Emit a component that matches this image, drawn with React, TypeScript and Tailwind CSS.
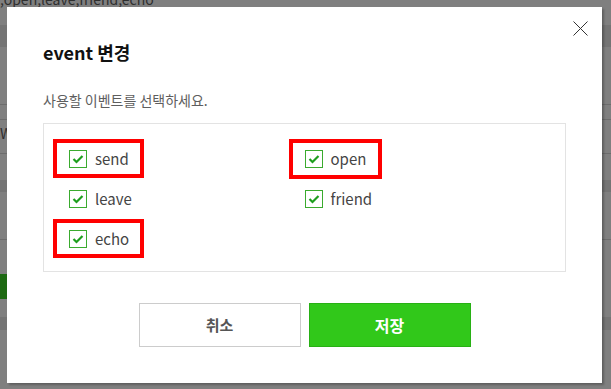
import React from "react";

const font = { fontFamily: '"Noto Sans CJK KR", "Noto Sans", sans-serif' };

function Check() {
  return (
    <span className="flex h-[18px] w-[18px] shrink-0 items-center justify-center border border-[#3aab2e] bg-white">
      <svg width="12" height="10" viewBox="0 0 12 10">
        <path d="M1.5 5 L4.5 8 L10.5 2" fill="none" stroke="#1e9e1e" strokeWidth="2.2" />
      </svg>
    </span>
  );
}

function Item({ label, marked, wide }: { label: string; marked?: boolean; wide?: boolean }) {
  return (
    <div className="flex h-[40px] items-center">
      <div className="relative flex items-center gap-2">
        <Check />
        <span className="text-[15px] leading-[18px] text-[#444]">{label}</span>
        {marked && (
          <div
            className={
              wide
                ? "pointer-events-none absolute bottom-[-11px] left-[-16px] right-[-16px] top-[-11px] border-4 border-[#ff0000]"
                : "pointer-events-none absolute bottom-[-10px] left-[-16px] right-[-15px] top-[-11px] border-4 border-[#ff0000]"
            }
          />
        )}
      </div>
    </div>
  );
}

export default function App() {
  return (
    <div className="relative h-[389px] w-[611px] overflow-hidden bg-[#7f7f7f]" style={font}>
      {/* background page under overlay */}
      <div className="flex h-full flex-col">
        <div className="h-[25px] overflow-hidden">
          <div className="mt-[-8px] text-[14px] leading-[14px] text-[#2e2e2e]">,open,leave,friend,echo</div>
        </div>
        <div className="h-[22px] bg-[#747474]" />
        <div className="h-[58px] border-b border-[#6c6c6c]" />
        <div className="h-[15px] border-b border-[#6c6c6c]" />
        <div className="h-[34px] border-b border-[#6c6c6c] pt-[6px] text-[14px] leading-[14px] text-[#2e2e2e]">W</div>
        <div className="h-[26px]" />
        <div className="h-[12px] bg-[#747474]" />
        <div className="h-[48px] border-b border-[#6c6c6c]" />
        <div className="h-[34px]" />
        <div className="h-[25px] w-[40px] bg-[#1d6912]" />
        <div className="h-[18px]" />
        <div className="h-[13px] bg-[#747474]" />
        <div className="flex-1" />
      </div>

      {/* modal */}
      <div className="absolute left-[7px] top-[7px] flex h-[376px] w-[595px] flex-col bg-white px-[36px] pt-[33px] shadow-[2px_2px_2px_rgba(0,0,0,0.25)]">
        <button className="absolute right-[14px] top-[14px] flex h-[15px] w-[15px] items-center justify-center">
          <svg width="15" height="15" viewBox="0 0 15 15">
            <path d="M0.5 0.5 L14.5 14.5 M14.5 0.5 L0.5 14.5" stroke="#333" strokeWidth="1" fill="none" />
          </svg>
        </button>
        <h2 className="text-[18px] font-bold leading-[24px] text-[#111]">event 변경</h2>
        <p className="mt-[26px] text-[14px] leading-[20px] text-[#5e5e5e]">사용할 이벤트를 선택하세요.</p>
        <div className="mt-[13px] grid h-[149px] grid-cols-2 content-start border border-[#e3e3e3] px-[25px] pt-[15px]">
          <Item label="send" marked />
          <Item label="open" marked wide />
          <Item label="leave" />
          <Item label="friend" />
          <Item label="echo" marked />
        </div>
        <div className="mt-[31px] flex justify-center gap-2">
          <button className="h-[44px] w-[162px] border border-[#cccccc] bg-white text-[15px] font-bold text-[#555]">취소</button>
          <button className="h-[44px] w-[162px] border border-[#28b015] bg-[#31c81a] text-[16px] font-bold text-white">저장</button>
        </div>
      </div>
    </div>
  );
}
